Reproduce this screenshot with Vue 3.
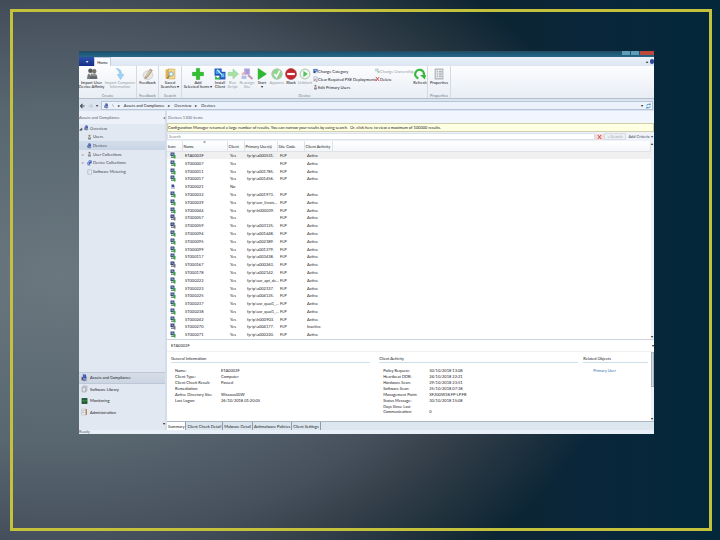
<script setup>
const createTools = [
  { icon: 'users', lines: ['Import User', 'Device Affinity'], size: 'w25' },
  { icon: 'import', lines: ['Import Computer', 'Information'], size: 'w32', dim: true },
]
const deviceTools = [
  { icon: 'plus', lines: ['Add', 'Selected Items ▾'], size: 'w32' },
  { icon: 'install', lines: ['Install', 'Client'], size: 'w12' },
  { icon: 'run', lines: ['Run', 'Script'], size: 'w13', dim: true },
  { icon: 'reassign', lines: ['Reassign', 'Site'], size: 'w16', dim: true },
  { icon: 'start', lines: ['Start', '▾'], size: 'w14' },
  { icon: 'approve', lines: ['Approve'], size: 'w16', dim: true },
  { icon: 'block', lines: ['Block'], size: 'w12' },
  { icon: 'unblock', lines: ['Unblock'], size: 'w16', dim: true },
]
const tree = [
  { icon: 'pc', label: 'Overview', level: 'top', mark: '◢' },
  { icon: 'user', label: 'Users', level: 'sub', mark: '' },
  { icon: 'pc', label: 'Devices', level: 'sub', mark: '', active: true },
  { icon: 'user', label: 'User Collections', level: 'sub', mark: '▹' },
  { icon: 'pcs', label: 'Device Collections', level: 'sub', mark: '▹' },
  { icon: 'meter', label: 'Software Metering', level: 'sub', mark: '' },
]
const workspaces = [
  { icon: 'pc', label: 'Assets and Compliance', active: true },
  { icon: 'library', label: 'Software Library' },
  { icon: 'monitor', label: 'Monitoring' },
  { icon: 'admin', label: 'Administration' },
]
const devices = [
  ['ETA0003F', 'Yes', 'fp-ip\\a000531.', 'FLP', 'Active', 'on'],
  ['ST000007', 'Yes', '', 'FLP', 'Active', 'on'],
  ['ST000011', 'Yes', 'fp-ip\\a001785.', 'FLP', 'Active', 'on'],
  ['ST000017', 'Yes', 'fp-ip\\a001456.', 'FLP', 'Active', 'on'],
  ['ST000021', 'No', '', '', '', 'none'],
  ['ST000032', 'Yes', 'fp-ip\\a001973.', 'FLP', 'Active', 'on'],
  ['ST000039', 'Yes', 'fp-ip\\usr_livrais...', 'FLP', 'Active', 'on'],
  ['ST000044', 'Yes', 'fp-ip\\h000039.', 'FLP', 'Active', 'on'],
  ['ST000057', 'Yes', '', 'FLP', 'Active', 'off'],
  ['ST000059', 'Yes', 'fp-ip\\a003125.', 'FLP', 'Active', 'off'],
  ['ST000094', 'Yes', 'fp-ip\\a001448.', 'FLP', 'Active', 'on'],
  ['ST000095', 'Yes', 'fp-ip\\a002389.', 'FLP', 'Active', 'on'],
  ['ST000099', 'Yes', 'fp-ip\\a001379.', 'FLP', 'Active', 'on'],
  ['ST000117', 'Yes', 'fp-ip\\a003438.', 'FLP', 'Active', 'on'],
  ['ST000167', 'Yes', 'fp-ip\\a000263.', 'FLP', 'Active', 'off'],
  ['ST000178', 'Yes', 'fp-ip\\a002142.', 'FLP', 'Active', 'on'],
  ['ST000222', 'Yes', 'fp-ip\\usr_apt_de...', 'FLP', 'Active', 'on'],
  ['ST000223', 'Yes', 'fp-ip\\a002337.', 'FLP', 'Active', 'on'],
  ['ST000225', 'Yes', 'fp-ip\\a004135.', 'FLP', 'Active', 'on'],
  ['ST000237', 'Yes', 'fp-ip\\usr_quai1_...', 'FLP', 'Active', 'on'],
  ['ST000238', 'Yes', 'fp-ip\\usr_quai1_...', 'FLP', 'Active', 'on'],
  ['ST000242', 'Yes', 'fp-ip\\h000903.', 'FLP', 'Active', 'on'],
  ['ST000270', 'Yes', 'fp-ip\\a004177.', 'FLP', 'Inactive', 'off'],
  ['ST000271', 'Yes', 'fp-ip\\a000220.', 'FLP', 'Active', 'on'],
]
const general = [
  ['Name:', 'ETA0003F'],
  ['Client Type:', 'Computer'],
  ['Client Check Result:', 'Passed'],
  ['Remediation:', ''],
  ['Active Directory Site:', 'Wissous00W'],
  ['Last Logon:', '26/10/2018 01:20:05'],
]
const activity = [
  ['Policy Request:', '30/10/2018 13:08'],
  ['Heartbeat DDR:', '24/10/2018 22:21'],
  ['Hardware Scan:', '29/10/2018 23:51'],
  ['Software Scan:', '25/10/2018 07:38'],
  ['Management Point:', 'XF200W38.FP-LP.FR'],
  ['Status Message:', '30/10/2018 15:08'],
  ['Days Since Last Communication:', '0'],
]
const tabs = ['Summary', 'Client Check Detail', 'Malware Detail', 'Antimalware Policies', 'Client Settings']
</script>

<template>
  <svg class="sprite" aria-hidden="true">
    <symbol id="i-users" viewBox="0 0 22 22">
      <circle cx="8" cy="5" r="4" fill="#565b5e" /><path d="M2 20q0-11 6-11t6 11z" fill="#74797b" />
      <circle cx="15" cy="6" r="4" fill="#77736c" /><path d="M9 20q0-10 6-10t6 10z" fill="#8f918f" />
      <path d="M8 15h12v5H8z" fill="#5d6569" /><path d="M5 9l3 5 2-5z" fill="#e8eef2" />
    </symbol>
    <symbol id="i-import" viewBox="0 0 22 22">
      <path d="M4 1q10 0 10 11h4l-6 9-6-9h4q0-7-6-11z" fill="#9fd3f0" stroke="#7fbfe4" stroke-width="1" />
    </symbol>
    <symbol id="i-feedback" viewBox="0 0 22 22">
      <ellipse cx="11" cy="13" rx="9" ry="8" fill="#e7e8e6" stroke="#babdbd" />
      <path d="M6 16l9-14 4 2-9 13-5 3z" fill="#c9ad83" stroke="#8e8778" /><path d="M7 15l8-10" stroke="#f8eede" stroke-width="1.5" />
    </symbol>
    <symbol id="i-saved" viewBox="0 0 22 22">
      <path d="M3 3l7-2v19H3z" fill="#e1b34c" /><path d="M8 2h12v18H8z" fill="#f4d888" stroke="#c9a04a" />
      <circle cx="13" cy="11" r="4" fill="#e7f4fb" stroke="#6e9ab5" stroke-width="1.5" /><path d="M10 14l-4 5" stroke="#87754a" stroke-width="2" />
    </symbol>
    <symbol id="i-plus" viewBox="0 0 22 22">
      <path d="M8 1h6v7h7v6h-7v7H8v-7H1V8h7z" fill="#2fc12f" stroke="#1fa324" />
    </symbol>
    <symbol id="i-install" viewBox="0 0 22 22">
      <path d="M1 1h13v13H1z" fill="#1c4fb4" /><path d="M3 3h9v8H3z" fill="#3fa0ee" /><path d="M10 7h11v14H10z" fill="#2059ba" />
      <path d="M13 10h6v7h-6z" fill="#62b9f3" /><path d="M2 14l5 5 4-4v6H2z" fill="#2fb247" /><path d="M6 3l8 9" stroke="#eaf6ff" stroke-width="2" />
    </symbol>
    <symbol id="i-run" viewBox="0 0 22 22"><path d="M2 8h9V2l10 9-10 9v-6H2z" fill="#a8e0a6" stroke="#8dd28d" /></symbol>
    <symbol id="i-reassign" viewBox="0 0 22 22">
      <path d="M6 1h10v11H6z" fill="#a69ae0" /><path d="M1 14h9v6H1z" fill="#b4bce8" /><path d="M13 13l8 7" stroke="#c99bb5" stroke-width="4" />
      <path d="M2 12l7-6" stroke="#e7a6a6" stroke-width="3" />
    </symbol>
    <symbol id="i-start" viewBox="0 0 22 22"><path d="M4 1l15 10L4 21z" fill="#2bbc2e" stroke="#1f9f26" /></symbol>
    <symbol id="i-approve" viewBox="0 0 22 22">
      <circle cx="11" cy="11" r="9.500" fill="#8fd48e" stroke="#b5c9b5" stroke-width="2" /><path d="M6 11l4 5 6-11" fill="none" stroke="#fff" stroke-width="3" />
    </symbol>
    <symbol id="i-block" viewBox="0 0 22 22">
      <circle cx="11" cy="11" r="10" fill="#c4242b" stroke="#9c2026" /><path d="M4 9h14v4H4z" fill="#fff" />
    </symbol>
    <symbol id="i-unblock" viewBox="0 0 22 22">
      <circle cx="11" cy="11" r="9" fill="#f4faf4" stroke="#b3ccb6" stroke-width="2" /><path d="M8 5l8 6-8 6z" fill="#57c25c" />
    </symbol>
    <symbol id="i-refresh" viewBox="0 0 22 22">
      <path d="M8 19A8 8 0 1 1 18 13" fill="none" stroke="#32b83a" stroke-width="4" /><path d="M11 13h11l-2 8z" fill="#32b83a" />
    </symbol>
    <symbol id="i-props" viewBox="0 0 22 22">
      <path d="M4 2h14v18H4z" fill="#e4e7ea" stroke="#aeb4ba" stroke-width="2" /><path d="M7 7h2M11 7h5M7 11h2M11 11h5M7 15h2M11 15h5" stroke="#9aa2aa" stroke-width="2" />
    </symbol>
    <symbol id="i-pc" viewBox="0 0 12 12">
      <path d="M3 0h5l2 7H4z" fill="#3343a0" /><path d="M4 1h3l1 4H5z" fill="#5070d0" /><path d="M1 8l6-1 4 3-6 2z" fill="#7c88a4" /><path d="M1 4h2l1 6H1z" fill="#44507c" />
    </symbol>
    <symbol id="i-pcs" viewBox="0 0 12 12">
      <path d="M4 0h7v7H4z" fill="#2a4cc0" /><path d="M5 1h4v3H5z" fill="#8fb5f2" /><path d="M1 4h6v6H1z" fill="#3b56a8" /><path d="M2 5h3v3H2z" fill="#b3c8ee" /><path d="M2 10h6v2H2z" fill="#8590a8" />
    </symbol>
    <symbol id="i-user" viewBox="0 0 12 12">
      <circle cx="6" cy="3" r="2.500" fill="#8a7a64" /><path d="M3 12V8q0-2 3-2t3 2v4z" fill="#6d7780" /><path d="M5 6h2l-1 4z" fill="#e7edf2" />
    </symbol>
    <symbol id="i-meter" viewBox="0 0 12 12">
      <path d="M2 1h9v10H2z" fill="#f3f7fb" stroke="#71839c" /><path d="M4 8l3-4" stroke="#8195ad" />
    </symbol>
    <symbol id="i-device-on" viewBox="0 0 12 12">
      <path d="M1 0h8v7H1z" fill="#37507c" /><path d="M3 2h4v3H3z" fill="#7ba0c4" /><path d="M2 8h7v3H2z" fill="#77907f" /><path d="M6 5h5v7H8z" fill="#3ca04c" />
    </symbol>
    <symbol id="i-device-off" viewBox="0 0 12 12">
      <path d="M1 0h8v7H1z" fill="#35437a" /><path d="M3 2h4v3H3z" fill="#7b8fc4" /><path d="M2 8h7v3H2z" fill="#858a96" /><path d="M6 5h5v7H8z" fill="#777a88" />
    </symbol>
    <symbol id="i-device-none" viewBox="0 0 12 12">
      <path d="M3 2h5l1 5H3z" fill="#3a48a4" /><path d="M2 8h8v2H2z" fill="#7f89ac" />
    </symbol>
    <symbol id="i-library" viewBox="0 0 12 12">
      <path d="M4 1h6v8H4z" fill="#eef1f4" stroke="#8c939b" /><path d="M2 3h6v8H2z" fill="#dfe4e9" stroke="#848b94" />
    </symbol>
    <symbol id="i-monitor" viewBox="0 0 12 12">
      <path d="M1 1h10v10H1z" fill="#1e5730" /><path d="M2 7l2-3 2 4 2-4 2 2" fill="none" stroke="#58b56b" />
    </symbol>
    <symbol id="i-admin" viewBox="0 0 12 12">
      <path d="M1 1h7v10H1z" fill="#f2f3f4" stroke="#b0b5bb" /><path d="M2 4h4M2 7h4" stroke="#8895a8" /><path d="M9 1v10" stroke="#b9744c" stroke-width="2" />
    </symbol>
    <symbol id="i-category" viewBox="0 0 12 12">
      <path d="M1 1h10v10H1z" fill="#24499c" /><path d="M3 2h6v4H3z" fill="#8ab3ea" /><path d="M6 7h5v4H6z" fill="#dfe7f2" />
    </symbol>
    <symbol id="i-clear" viewBox="0 0 12 12">
      <path d="M2 1h8v7H2z" fill="#eef1f7" stroke="#7c86a6" /><path d="M1 11l5-4M6 11h5" stroke="#8a5c74" stroke-width="2" />
    </symbol>
    <symbol id="i-owner" viewBox="0 0 12 12">
      <path d="M1 1h7v5H1z" fill="#cfe3ec" stroke="#98b6bd" /><path d="M5 6h6v5H7z" fill="#9ed0a8" />
    </symbol>
    <symbol id="i-delete" viewBox="0 0 12 12"><path d="M2 1l8 10M10 1L2 11" stroke="#d02c2c" stroke-width="2" /></symbol>
    <symbol id="i-back" viewBox="0 0 12 12"><path d="M11 6H2M6 1L1 6l5 5" fill="none" stroke="#3d4650" stroke-width="2.500" /></symbol>
    <symbol id="i-forward" viewBox="0 0 12 12"><path d="M1 6h9M6 1l5 5-5 5" fill="none" stroke="#b4c1d0" stroke-width="2" /></symbol>
    <symbol id="i-sync" viewBox="0 0 12 12"><path d="M2 5q0-3 4-3h4M10 0v4M10 7q0 3-4 3H2M2 8v4" fill="none" stroke="#2f7fb8" stroke-width="2" /></symbol>
  </svg>

  <main class="slide">
    <div class="frame">
      <section class="window">
        <header class="titlebar">
          <span class="ctl"></span><span class="ctl"></span><span class="ctl close"></span>
        </header>
        <nav class="ribbon-tabs">
          <button class="file-tab" aria-label="File">▾</button>
          <button class="home-tab">Home</button>
          <span class="fill"></span>
          <span class="caret">▴</span>
          <span class="help"></span>
        </nav>

        <div class="ribbon">
          <div class="group">
            <div class="tools">
              <button v-for="t in createTools" :key="t.icon" class="tool" :class="[t.size, { dim: t.dim }]">
                <svg class="big"><use :href="'#i-' + t.icon" /></svg>
                <span v-for="l in t.lines" :key="l">{{ l }}</span>
              </button>
            </div>
            <div class="caption">Create</div>
          </div>
          <div class="group">
            <div class="tools">
              <button class="tool w21"><svg class="big"><use href="#i-feedback" /></svg><span>Feedback</span></button>
            </div>
            <div class="caption">Feedback</div>
          </div>
          <div class="group">
            <div class="tools">
              <button class="tool w22"><svg class="big"><use href="#i-saved" /></svg><span>Saved</span><span>Searches ▾</span></button>
            </div>
            <div class="caption">Search</div>
          </div>
          <div class="group">
            <div class="tools">
              <button v-for="t in deviceTools" :key="t.icon" class="tool" :class="[t.size, { dim: t.dim }]">
                <svg class="big"><use :href="'#i-' + t.icon" /></svg>
                <span v-for="l in t.lines" :key="l">{{ l }}</span>
              </button>
              <div class="stack w62">
                <button><svg class="small"><use href="#i-category" /></svg>Change Category</button>
                <button><svg class="small"><use href="#i-clear" /></svg>Clear Required PXE Deployments</button>
                <button><svg class="small"><use href="#i-user" /></svg>Edit Primary Users</button>
              </div>
              <div class="stack w38">
                <button class="dim"><svg class="small"><use href="#i-owner" /></svg>Change Ownership</button>
                <button><svg class="small"><use href="#i-delete" /></svg>Delete</button>
              </div>
              <button class="tool w14"><svg class="big"><use href="#i-refresh" /></svg><span>Refresh</span></button>
            </div>
            <div class="caption">Device</div>
          </div>
          <div class="group">
            <div class="tools">
              <button class="tool w22"><svg class="big"><use href="#i-props" /></svg><span>Properties</span></button>
            </div>
            <div class="caption">Properties</div>
          </div>
        </div>

        <nav class="address">
          <button aria-label="Back"><svg class="small"><use href="#i-back" /></svg></button>
          <button aria-label="Forward"><svg class="small"><use href="#i-forward" /></svg></button>
          <span>▾</span>
          <div class="crumbs">
            <svg class="small"><use href="#i-pc" /></svg>
            <span>\</span><i>▸</i>
            <a href="#assets">Assets and Compliance</a><i>▸</i>
            <a href="#overview">Overview</a><i>▸</i>
            <a href="#devices">Devices</a>
            <span class="fill"></span>
            <span>▾</span>
            <svg class="small"><use href="#i-sync" /></svg>
          </div>
        </nav>

        <div class="body">
          <aside class="side">
            <div class="side-head"><span>Assets and Compliance</span><span>◂</span></div>
            <ul class="tree">
              <li v-for="n in tree" :key="n.label" :class="[n.level, { active: n.active }]">
                <span class="mark">{{ n.mark }}</span>
                <a :href="'#' + n.icon"><svg class="small"><use :href="'#i-' + n.icon" /></svg>{{ n.label }}</a>
              </li>
            </ul>
            <span class="fill"></span>
            <ul class="spaces">
              <li v-for="w in workspaces" :key="w.label" :class="{ active: w.active }">
                <a :href="'#' + w.icon"><svg class="mid"><use :href="'#i-' + w.icon" /></svg>{{ w.label }}</a>
              </li>
            </ul>
            <div class="more">▾</div>
          </aside>

          <section class="main">
            <h1>Devices 1300 items</h1>
            <p class="notice">Configuration Manager returned a large number of results. You can narrow your results by using search. &nbsp;Or, click here to view a maximum of 100000 results.</p>
            <form class="search" @submit.prevent>
              <input type="text" aria-label="Search" placeholder="Search">
              <button type="button" class="clear" aria-label="Clear"><svg class="small"><use href="#i-delete" /></svg></button>
              <button type="submit" class="go">⌕ Search</button>
              <button type="button" class="criteria">Add Criteria ▾</button>
            </form>
            <div class="list">
              <table>
                <colgroup><col class="c-icon"><col class="c-name"><col class="c-client"><col class="c-user"><col class="c-site"><col class="c-act"><col></colgroup>
                <thead>
                  <tr><th>Icon</th><th class="sorted">Name</th><th>Client</th><th>Primary User(s)</th><th>Site Code</th><th>Client Activity</th><th></th></tr>
                </thead>
                <tbody>
                  <tr v-for="(d, i) in devices" :key="d[0]" :class="{ picked: i === 0 }">
                    <td><svg class="state"><use :href="'#i-device-' + d[5]" /></svg></td>
                    <td>{{ d[0] }}</td><td>{{ d[1] }}</td><td>{{ d[2] }}</td><td>{{ d[3] }}</td><td>{{ d[4] }}</td><td></td>
                  </tr>
                </tbody>
              </table>
              <div class="scroll"><span>▴</span><span>▾</span></div>
            </div>

            <h2><span>ETA0003F</span><span>▾</span></h2>
            <div class="detail">
              <div class="cards">
                <section class="card general">
                  <h3>General Information</h3>
                  <dl><template v-for="r in general" :key="r[0]"><dt>{{ r[0] }}</dt><dd>{{ r[1] }}</dd></template></dl>
                </section>
                <section class="card activity">
                  <h3>Client Activity</h3>
                  <dl><template v-for="r in activity" :key="r[0]"><dt>{{ r[0] }}</dt><dd>{{ r[1] }}</dd></template></dl>
                </section>
                <section class="card">
                  <h3>Related Objects</h3>
                  <a class="link" href="#primary-user">Primary User</a>
                </section>
              </div>
              <div class="scroll"><span class="thumb"></span><span>▾</span></div>
            </div>
            <nav class="tabs">
              <button v-for="(t, i) in tabs" :key="t" :class="{ active: i === 0 }">{{ t }}</button>
            </nav>
          </section>
        </div>
        <footer class="status">Ready</footer>
      </section>
    </div>
  </main>
</template>

<style>
body { margin: 0; background: #0a2434; }
</style>

<style scoped>
* { box-sizing: border-box; }
.sprite { position: absolute; width: 0; height: 0; }
button, input { margin: 0; padding: 0; border: 0; background: none; font: inherit; color: inherit; border-radius: 0; }
a { color: inherit; text-decoration: none; }
ul, dl, dd, p, h1, h2, h3 { margin: 0; padding: 0; font: inherit; list-style: none; }
svg { display: block; flex: none; }
.fill { flex: 1; }
.big { width: 12px; height: 12px; }
.mid { width: 7px; height: 8px; }
.state { width: 6px; height: 7px; }
.small { width: 5px; height: 6px; }
.dim { color: #999fa6; }

.slide {
  display: flex;
  min-height: 100vh;
  padding: 9px 8px 9px 10px;
  background: radial-gradient(ellipse 78% 70% at 8% 51%, #6a777f 0%, #586670 45%, #46505c 70%, #343f4a 82%, #11272f00 104%), linear-gradient(90deg, #14252e, #0e2530 62%, #0a263a 82%, #03283a);
}
.frame { flex: 1; display: flex; min-width: 0; padding: 39px 55px 94px 66px; border: 3px solid #c4c13c; }
.window {
  flex: 1;
  display: flex;
  flex-direction: column;
  min-width: 0;
  background: #e6edf6;
  color: #1b2025;
  font: 4px/5px Lato, "Liberation Sans", sans-serif;
  white-space: nowrap;
}
.titlebar { display: flex; justify-content: flex-end; gap: 1px; height: 6px; background: linear-gradient(#274c5f, #1d5b7c 50%, #2b6785); }
.ctl { width: 8px; height: 4px; background: #5f9cb8; }
.ctl.close { width: 14px; background: #bb4a3b; }
.ribbon-tabs { display: flex; align-items: stretch; height: 9px; background: linear-gradient(#e9f0f8, #dce5f1); }
.file-tab { width: 15px; background: linear-gradient(#2d50ad, #152f86); color: #fff; }
.home-tab { width: 17px; background: #f9fbfe; border: 1px solid #c3cfde; border-bottom: 0; }
.caret { padding: 2px; }
.help { width: 4px; height: 5px; margin-top: 2px; background: #2d4796; border-radius: 2px; }

.ribbon { display: flex; height: 33px; border-bottom: 1px solid #b4bfcd; background: linear-gradient(#fcfdfe, #f0f3f8 60%, #e9eef5); }
.group { display: flex; flex-direction: column; justify-content: space-between; padding: 2px 0 0; border-right: 1px solid #d3dae3; }
.tools { display: flex; align-items: flex-start; }
.tool { display: flex; flex-direction: column; align-items: center; line-height: 4px; }
.tool svg { margin-bottom: 1px; }
.caption { text-align: center; color: #747c86; }
.w12 { width: 12px; } .w13 { width: 13px; } .w14 { width: 14px; } .w16 { width: 16px; }
.w21 { width: 21px; } .w22 { width: 22px; } .w25 { width: 25px; } .w32 { width: 32px; }
.w38 { width: 38px; } .w62 { width: 62px; }
.stack { display: flex; flex-direction: column; gap: 2px; }
.stack button { display: flex; align-items: center; }

.address { display: flex; align-items: center; gap: 3px; padding: 2px 1px 1px; height: 12px; background: #dbe4ef; }
.crumbs { flex: 1; display: flex; align-items: center; gap: 3px; height: 9px; padding: 0 1px 0 2px; background: #ecf2fb; border: 1px solid #b6c5d8; }
.crumbs i { padding: 0 1px; font-style: normal; }

.body { flex: 1; display: flex; min-height: 0; }
.side { display: flex; flex-direction: column; width: 88px; background: #e1e8f1; border-right: 2px solid #d4deea; }
.side-head { display: flex; align-items: center; justify-content: space-between; height: 13px; background: #edf2fa; color: #565e68; }
.tree { display: grid; grid-auto-rows: 1fr; height: 52px; color: #3f4750; }
.tree li { display: flex; align-items: center; }
.tree a, .spaces a { display: flex; align-items: center; gap: 1px; }
.tree .mark { width: 5px; }
.tree .sub .mark { width: 8px; padding-left: 3px; }
.tree .active { background: linear-gradient(#d3deec, #c8d5e6); }
.spaces { display: grid; grid-auto-rows: 1fr; height: 46px; }
.spaces li { display: flex; align-items: center; padding-left: 2px; }
.spaces a { gap: 2px; }
.spaces .active { background: linear-gradient(#d6dde7, #cbd5e1); border: 1px solid #bcc8d6; border-width: 1px 0; }
.more { height: 12px; padding-top: 3px; text-align: right; }

.main { flex: 1; display: flex; flex-direction: column; min-width: 0; background: #fff; }
h1 { height: 12px; padding: 4px 1px; background: #f1f6fe; color: #5f6771; }
.notice { height: 9px; padding: 1px 0; background: #ffffe1; border: 1px solid #cfcfae; }
.search { display: flex; align-items: center; height: 9px; background: #eff3f9; color: #444c56; }
.search input { flex: 1; min-width: 0; height: 7px; padding: 0 1px; background: #fff; border: 1px solid #dbe1ea; }
.search input::placeholder { color: #7b828a; opacity: 1; }
.clear { display: flex; justify-content: center; width: 9px; height: 6px; background: #f3dcdc; }
.go { width: 22px; height: 7px; margin-right: 1px; background: #eceff4; border: 1px solid #d6dce4; color: #a4a9b0; line-height: 5px; }
.criteria { width: 27px; }

.list { display: flex; border-bottom: 1px solid #ccd3dc; }
table { flex: 1; width: 100%; height: 198px; table-layout: fixed; border-collapse: collapse; }
.c-icon { width: 15px; } .c-name { width: 45px; } .c-client { width: 17px; } .c-user { width: 33px; } .c-site { width: 27px; } .c-act { width: 28px; }
th { height: 10px; padding: 2px 0 0 1px; font-weight: normal; text-align: left; background: linear-gradient(#fff, #f3f5f8); border-right: 1px solid #dfe3e9; border-bottom: 1px solid #dfe3e9; }
.sorted { background: radial-gradient(circle at 50% 1px, #a3acb6 0 1px, transparent 1px), linear-gradient(#fff, #f3f5f8); }
td { padding: 0 0 0 3px; }
.picked { background: #f0f0f1; }
.scroll { display: flex; flex-direction: column; justify-content: space-between; width: 3px; background: #eef1f5; }

h2 { display: flex; align-items: center; justify-content: space-between; height: 12px; padding-left: 4px; border-bottom: 1px solid #eff1f4; }
.detail { flex: 1; display: flex; }
.cards { flex: 1; display: flex; padding: 4px 3px 0 4px; }
.card { flex: 66; min-width: 0; }
.card.general { flex: 203; padding-right: 9px; }
.card.activity { flex: 203; padding-right: 5px; }
h3 { height: 7px; margin-bottom: 5px; border-bottom: 1px solid #cde0ea; }
dl { display: grid; grid-template-columns: 46px 1fr; row-gap: 1px; padding-left: 4px; align-items: end; }
dt { max-width: 34px; }
.activity dt:last-of-type { white-space: normal; }
.link { display: block; padding-left: 10px; color: #2f75b3; }
.thumb { height: 35px; background: #d5dbe3; border: 1px solid #a9b3c0; }
.tabs { display: flex; height: 9px; background: #dce6ee; border-top: 1px solid #a9b8c4; }
.tabs button { padding: 0 1px; border-right: 1px solid #8f9ca8; }
.tabs .active { background: #fff; }
.status { height: 4px; overflow: hidden; background: #e8eff7; line-height: 4px; color: #59626c; }
</style>
